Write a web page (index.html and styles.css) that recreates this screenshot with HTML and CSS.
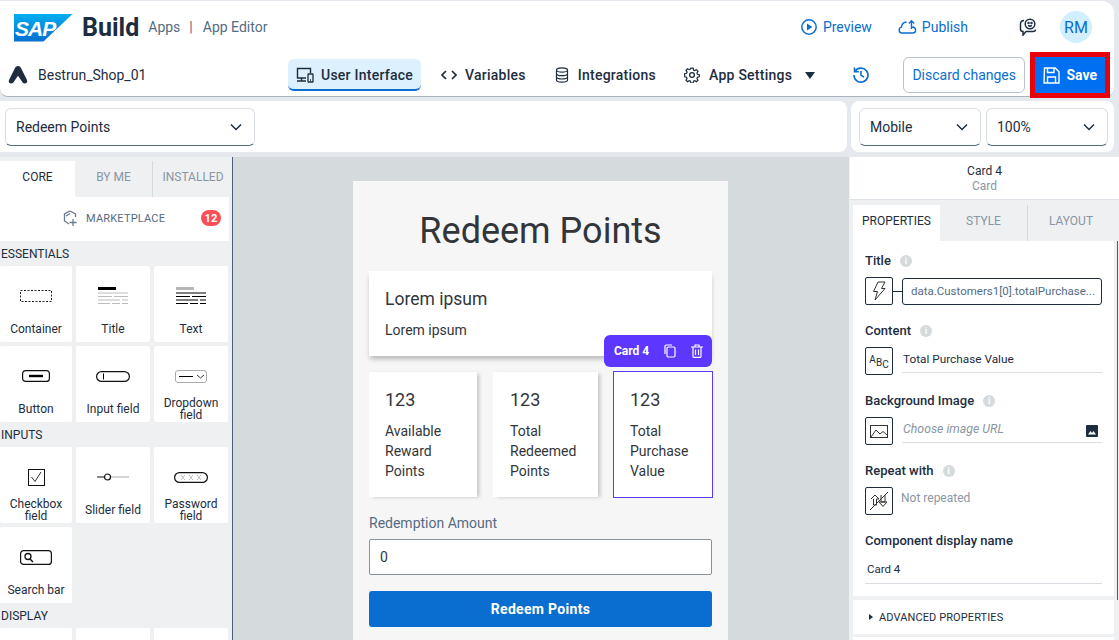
FILE: index.html
```html
<!DOCTYPE html>
<html lang="en">
<head>
  <meta charset="UTF-8">
  <meta name="viewport" content="width=device-width, initial-scale=1.0">
  <title>SAP Build Apps - App Editor</title>
  <link rel="stylesheet" href="styles.css">
</head>
<body>
  <div class="top-card">
    <div class="top-row">
      <div class="sap-logo">SAP</div>
      <span class="build">Build</span>
      <span class="crumb crumb-apps">Apps</span>
      <span class="crumb crumb-bar">|</span>
      <span class="crumb">App Editor</span>
      <div class="top-actions">
        <span class="link">
          <svg width="18" height="18" viewBox="0 0 18 18" fill="none" stroke="#0a6ed1" stroke-width="1.5"><circle cx="9" cy="9" r="7.2"/><path d="M7 5.6 12.4 9 7 12.4Z" fill="#0a6ed1" stroke="none"/></svg>
          Preview
        </span>
        <span class="link link-publish">
          <svg width="19" height="16" viewBox="0 0 19 16" fill="none" stroke="#0a6ed1" stroke-width="1.4"><path d="M6 14H4a3 3 0 0 1-.6-5.9C4 5 6 3 8.6 3.3M14 8c2.4 0 3.6 1.600 3.600 3.200 0 1.600-1 2.800-3 2.800H6"/><path d="M13.500 10V2M10.800 4.500 13.500 1.800 16.200 4.500"/></svg>
          Publish
        </span>
        <svg class="feedback" width="18" height="18" viewBox="0 0 18 18" fill="none" stroke="#1d2d3e" stroke-width="1.500"><path d="M5 2.500C2.500 2.500 1.500 4 1.500 6v5c0 1.500 1 2.500 2.500 2.500V17l3-3.500h7c1.500 0 2.500-1 2.500-2"/><circle cx="11" cy="6" r="4.800"/><circle cx="9.500" cy="5" r=".5"/><circle cx="12.500" cy="5" r=".5"/><path d="M9.200 7.200c1 1 2.600 1 3.600 0"/></svg>
        <div class="avatar">RM</div>
      </div>
    </div>
    <div class="nav-row">
      <svg class="app-mark" width="20" height="18" viewBox="0 0 20 18"><path d="M10 0c1.500 0 2.400.8 3 2l6 12c.8 1.700-.3 3.600-2.200 3.600-1.500 0-2.200-1-3-2.300L10 9.800l-3.800 5.500c-.8 1.300-1.500 2.300-3 2.300C1.300 17.600.2 15.700 1 14L7 2c.6-1.200 1.500-2 3-2Z" fill="#1d2d3e"/></svg>
      <span class="app-name">Bestrun_Shop_01</span>
      <div class="nav-tab nav-tab-on">
        <svg width="18" height="16" viewBox="0 0 18 16" fill="none" stroke="#1d2d3e" stroke-width="1.400"><path d="M10 11H1.500V1.500h13V6M1 14h9M5.500 11v3"/><rect x="12" y="7" width="5" height="8" rx=".6" stroke-width="1.300"/><path d="M14 13h1" /></svg>
        User Interface
      </div>
      <div class="nav-tab nav-vars">
        <svg width="16" height="10" viewBox="0 0 16 10" fill="none" stroke="#1d2d3e" stroke-width="1.700"><path d="M5 1 1 5l4 4M11 1l4 4-4 4"/></svg>
        Variables
      </div>
      <div class="nav-tab nav-integ">
        <svg width="14" height="16" viewBox="0 0 14 16" fill="none" stroke="#1d2d3e" stroke-width="1.200"><ellipse cx="7" cy="3" rx="5.500" ry="2.200"/><path d="M1.500 3v10c0 1.200 2.500 2.200 5.500 2.200s5.500-1 5.500-2.200V3M1.500 6.400c0 1.200 2.500 2.200 5.500 2.200s5.500-1 5.500-2.200M1.500 9.800c0 1.200 2.500 2.200 5.500 2.200s5.500-1 5.500-2.200"/></svg>
        Integrations
      </div>
      <div class="nav-tab nav-settings">
        <svg width="16" height="16" viewBox="0 0 16 16" fill="none" stroke="#1d2d3e" stroke-width="1.300"><circle cx="8" cy="8" r="2.400"/><path d="M6.800 1h2.400l.4 2 1.300.6 1.800-1 1.600 1.800-1.100 1.700.5 1.300 2 .5v2.200l-2 .5-.5 1.300 1.100 1.700-1.600 1.600-1.800-1-1.300.6-.4 2H6.800l-.4-2-1.300-.6-1.800 1-1.600-1.600 1.100-1.700-.5-1.300-2-.5V6.900l2-.5.500-1.300L1.700 3.400l1.600-1.800 1.800 1 1.300-.6Z" transform="translate(.4 .2) scale(.95)"/></svg>
        App Settings
      </div>
      <span class="caret"></span>
      <svg class="history" width="18" height="18" viewBox="0 0 18 18" fill="none" stroke="#0a6ed1" stroke-width="1.600"><path d="M3 5.500A7 7 0 1 1 2 9M2.500 1.500v4.300h4.300M9 5v4.300l3 1.800"/></svg>
      <button class="btn-discard">Discard changes</button>
      <div class="save-box">
        <button class="btn-save">
          <svg width="17" height="17" viewBox="0 0 17 17" fill="none" stroke="#fff" stroke-width="1.400"><path d="M1.500 1h10.700L16 4.800V16H1Z"/><path d="M4.500 1v4.500h6.500V1M4.500 16v-6h8v6"/></svg>
          Save
        </button>
      </div>
    </div>
  </div>

  <div class="tool-row">
    <div class="tool-card tool-left">
      <div class="select select-page"><span>Redeem Points</span><svg class="chev" width="12" height="8" viewBox="0 0 12 8"><path d="M1 1.500 6 6.500 11 1.500" fill="none" stroke="#1d2d3e" stroke-width="1.500"/></svg></div>
    </div>
    <div class="tool-card tool-right">
      <div class="select select-device"><span>Mobile</span><svg class="chev" width="12" height="8" viewBox="0 0 12 8"><path d="M1 1.500 6 6.500 11 1.500" fill="none" stroke="#1d2d3e" stroke-width="1.500"/></svg></div>
      <div class="select select-device"><span>100%</span><svg class="chev" width="12" height="8" viewBox="0 0 12 8"><path d="M1 1.500 6 6.500 11 1.500" fill="none" stroke="#1d2d3e" stroke-width="1.500"/></svg></div>
    </div>
  </div>

  <div class="main-row">
    <div class="left-panel">
      <div class="left-tabs">
        <div class="left-tab left-tab-on">CORE</div>
        <div class="left-tab left-tab-me">BY ME</div>
        <div class="left-tab left-tab-inst">INSTALLED</div>
      </div>
      <div class="market">
        <svg width="16" height="17" viewBox="0 0 16 17" fill="none" stroke="#6a7c90" stroke-width="1.300"><path d="M7 1 1.500 4v7L6 14M7 1l5.500 3v3M3 6l4-2.500M10 9v7M6.500 12.500h7"/></svg>
        <span class="market-text">MARKETPLACE</span>
        <span class="market-badge">12</span>
      </div>
      <div class="palette">
        <h4>ESSENTIALS</h4>
        <div class="grid">
          <div class="tile">
            <div class="tile-icon"><svg width="32" height="12" viewBox="0 0 32 12"><rect x=".5" y=".5" width="31" height="11" fill="none" stroke="#222" stroke-dasharray="2 1.500"/></svg></div>
            <span>Container</span>
          </div>
          <div class="tile">
            <div class="tile-icon"><svg width="30" height="18" viewBox="0 0 30 18"><rect width="18" height="3" fill="#000"/><path d="M0 6h30M0 9.500h14M16 9.500h14M0 13h22M24 13h6M0 16.500h12M14 16.500h8M24 16.500h6" stroke="#bbb"/></svg></div>
            <span>Title</span>
          </div>
          <div class="tile">
            <div class="tile-icon"><svg width="30" height="18" viewBox="0 0 30 18"><rect width="18" height="3" fill="#b5b5b5"/><path d="M0 6h30M0 9.500h14M16 9.500h14M0 13h22M24 13h6M0 16.500h12M14 16.500h8M24 16.500h6" stroke="#000"/></svg></div>
            <span>Text</span>
          </div>
          <div class="tile">
            <div class="tile-icon"><svg width="28" height="12" viewBox="0 0 28 12"><rect x=".6" y=".6" width="26.800" height="10.800" rx="3" fill="none" stroke="#111" stroke-width="1.200"/><rect x="7" y="4.800" width="14" height="2.400" fill="#000"/></svg></div>
            <span>Button</span>
          </div>
          <div class="tile">
            <div class="tile-icon"><svg width="34" height="11" viewBox="0 0 34 11"><rect x=".6" y=".6" width="32.800" height="9.800" rx="4.900" fill="none" stroke="#111" stroke-width="1.200"/><path d="M7.500 2.500v6" stroke="#000"/></svg></div>
            <span>Input field</span>
          </div>
          <div class="tile">
            <div class="tile-icon"><svg width="32" height="13" viewBox="0 0 32 13"><rect x=".5" y=".5" width="31" height="12" rx="2.500" fill="none" stroke="#aaa"/><path d="M4 6.500h14" stroke="#000"/><path d="M22 5l3.500 3L29 5" fill="none" stroke="#333"/></svg></div>
            <span class="two-line">Dropdown field</span>
          </div>
        </div>
        <h4>INPUTS</h4>
        <div class="grid">
          <div class="tile">
            <div class="tile-icon"><svg width="17" height="17" viewBox="0 0 17 17" fill="none"><rect x=".5" y=".5" width="16" height="16" stroke="#111"/><path d="M3.500 8 7 12.500 13 3" stroke="#333"/></svg></div>
            <span class="two-line">Checkbox field</span>
          </div>
          <div class="tile">
            <div class="tile-icon"><svg width="32" height="10" viewBox="0 0 32 10" fill="none"><path d="M0 5h7" stroke="#111"/><path d="M14 5h18" stroke="#aaa"/><circle cx="10.500" cy="5" r="3" stroke="#111" stroke-width="1.200"/></svg></div>
            <span>Slider field</span>
          </div>
          <div class="tile">
            <div class="tile-icon"><svg width="34" height="11" viewBox="0 0 34 11" fill="none"><rect x=".6" y=".6" width="32.800" height="9.800" rx="4.900" stroke="#111" stroke-width="1.200"/><path d="M7 3l4 5M11 3 7 8M15 3l4 5M19 3l-4 5M23 3l4 5M27 3l-4 5" stroke="#bbb"/></svg></div>
            <span class="two-line">Password field</span>
          </div>
          <div class="tile">
            <div class="tile-icon"><svg width="32" height="15" viewBox="0 0 32 15" fill="none"><rect x=".6" y=".6" width="30.800" height="13.800" rx="3" stroke="#111" stroke-width="1.200"/><circle cx="8" cy="6.500" r="3" stroke="#111" stroke-width="1.300"/><path d="M10 9l3 3" stroke="#111" stroke-width="1.500"/></svg></div>
            <span>Search bar</span>
          </div>
        </div>
        <h4>DISPLAY</h4>
        <div class="grid">
          <div class="tile"></div>
          <div class="tile"></div>
          <div class="tile"></div>
        </div>
      </div>
    </div>

    <div class="canvas">
      <div class="page">
        <h1 class="page-title">Redeem Points</h1>
        <div class="hero-card">
          <div class="hero-title">Lorem ipsum</div>
          <div class="hero-text">Lorem ipsum</div>
        </div>
        <div class="stat-row">
          <div class="stat stat-a">
            <div class="stat-num">123</div>
            <div class="stat-label">Available Reward Points</div>
          </div>
          <div class="stat stat-b">
            <div class="stat-num">123</div>
            <div class="stat-label">Total Redeemed Points</div>
          </div>
          <div class="stat stat-c">
            <div class="stat-num">123</div>
            <div class="stat-label">Total Purchase Value</div>
            <div class="selected-tag">
              <b>Card 4</b>
              <svg width="12" height="14" viewBox="0 0 12 14" fill="none" stroke="#fff" stroke-width="1.200"><rect x="3" y="3" width="8" height="10" rx="1.200"/><path d="M1 10V2.200C1 1.500 1.500 1 2.200 1H8"/></svg>
              <svg width="12" height="14" viewBox="0 0 12 14" fill="none" stroke="#fff" stroke-width="1.200"><path d="M0 3h12M4 3V1h4v2M2 3v9.500c0 .500.300.800.800.800h6.400c.500 0 .800-.300.800-.800V3M4.500 5.500v5.500M7.500 5.500v5.500"/></svg>
            </div>
          </div>
        </div>
        <div class="field-label">Redemption Amount</div>
        <div class="field-input">0</div>
        <div class="redeem-btn">Redeem Points</div>
      </div>
    </div>

    <div class="right-panel">
      <div class="card-head">
        <div class="card-head-name">Card 4</div>
        <div class="card-head-type">Card</div>
      </div>
      <div class="right-tabs">
        <div class="right-tab right-tab-on">PROPERTIES</div>
        <div class="right-tab right-tab-style">STYLE</div>
        <div class="right-tab right-tab-layout">LAYOUT</div>
      </div>
      <div class="props">
        <div class="prop-title">Title <i class="info">i</i></div>
        <div class="prop-row">
          <div class="prop-icon"><svg width="14" height="20" viewBox="0 0 14 20" fill="none" stroke="#333" stroke-width="1"><path d="M6 1h7L9.500 7.500H13L3 19l2.500-8.500H1.500Z"/></svg></div>
          <div class="prop-link"></div>
          <div class="prop-bound">data.Customers1[0].totalPurchase...</div>
        </div>
        <div class="prop-title">Content <i class="info">i</i></div>
        <div class="prop-row">
          <div class="prop-icon prop-abc"><span class="abc-a">A</span><span class="abc-b">B</span><span class="abc-c">C</span></div>
          <div class="prop-value">Total Purchase Value</div>
        </div>
        <div class="prop-title">Background Image <i class="info">i</i></div>
        <div class="prop-row">
          <div class="prop-icon"><svg width="18" height="13" viewBox="0 0 18 13" fill="none" stroke="#333"><rect x=".5" y=".5" width="17" height="12"/><path d="M1 12 6 5l4 4 3-2.500 4 3.500"/></svg></div>
          <div class="prop-value prop-hint">Choose image URL<svg class="pick" width="12" height="12" viewBox="0 0 12 12"><rect width="12" height="12" rx="1" fill="#1d2d3e"/><path d="M2 9.500 4.500 6 6 8l1.500-2 2.500 3.500Z" fill="#fff"/></svg></div>
        </div>
        <div class="prop-title">Repeat with <i class="info">i</i></div>
        <div class="prop-row">
          <div class="prop-icon"><svg width="18" height="20" viewBox="0 0 18 20" fill="none" stroke="#333"><path d="M1 8l4-4 4 4H6.500v6h-3V8M9 11h8l-4 4.500ZM11 4v7h4V4M0 19 18 1"/></svg></div>
          <div class="prop-plain">Not repeated</div>
        </div>
        <div class="prop-title">Component display name</div>
        <div class="prop-display">Card 4</div>
      </div>
      <div class="advanced"><span class="adv-caret"></span>ADVANCED PROPERTIES</div>
      <div class="after-advanced"></div>
    </div>
  </div>
</body>
</html>
```

FILE: styles.css
```css
* {
  box-sizing: border-box;
}
html, body {
  margin: 0;
  padding: 0;
  width: 1119px;
  height: 640px;
  overflow: hidden;
}
body {
  background: #e5e8ec;
  color: #1d2d3e;
  font-family: "Roboto", "Liberation Sans", sans-serif;
  font-size: 14px;
}

/* top header */
.top-card {
  margin: 1px 5px 0 0;
  height: 96px;
  background: white;
  border-radius: 0 12px 8px 8px;
  border-bottom: 1px solid #a9b4be;
  position: relative;
}
.top-row {
  height: 52px;
  display: flex;
  align-items: center;
  padding-left: 14px;
}
.sap-logo {
  width: 59px;
  height: 28px;
  margin-top: 1px;
  background: linear-gradient(#00aeef, #0a6ed1);
  clip-path: polygon(0 0, 100% 0, 50% 100%, 0 100%);
  color: white;
  font: italic bold 21px/29px "Liberation Sans", sans-serif;
  letter-spacing: -1px;
  padding-left: 1px;
}
.build {
  margin-left: 9px;
  font-size: 25px;
  font-weight: 700;
  color: #1d2d3e;
}
.crumb {
  font-size: 14px;
  color: #556b82;
}
.crumb-apps {
  margin-left: 9px;
}
.crumb-bar {
  margin: 0 10px 0 9px;
}
.top-actions {
  margin-left: auto;
  display: flex;
  align-items: center;
  padding-right: 22px;
}
.link {
  display: flex;
  align-items: center;
  gap: 5px;
  color: #0a6ed1;
  font-size: 14px;
}
.link-publish {
  margin-left: 26px;
}
.feedback {
  margin-left: 51px;
}
.avatar {
  margin-left: 23px;
  width: 32px;
  height: 32px;
  border-radius: 50%;
  background: #d1efff;
  color: #0a6ed1;
  font-size: 16px;
  display: flex;
  align-items: center;
  justify-content: center;
}
.nav-row {
  height: 44px;
  display: flex;
  align-items: center;
  padding-left: 8px;
}
.app-name {
  margin-left: 10px;
  width: 110px;
  color: #1d2d3e;
}
.nav-tab {
  display: flex;
  align-items: center;
  font-weight: 500;
  letter-spacing: .25px;
  gap: 8px;
  height: 32px;
}
.nav-tab-on {
  margin-left: 140px;
  width: 133px;
  padding: 2px 0 0 8px;
  gap: 7px;
  background: #dcf0fe;
  border-radius: 6px;
  border-bottom: 2px solid #0a6ed1;
}
.nav-vars {
  margin-left: 20px;
}
.nav-integ {
  margin-left: 29px;
  gap: 9px;
}
.nav-settings {
  margin-left: 28px;
  gap: 9px;
}
.caret {
  margin-left: 13px;
  width: 0;
  height: 0;
  border-left: 5px solid transparent;
  border-right: 5px solid transparent;
  border-top: 7px solid #1d2d3e;
}
.history {
  margin-left: 37px;
}
.btn-discard {
  margin-left: 33px;
  width: 122px;
  height: 36px;
  border: 1px solid #b8c2cc;
  border-radius: 6px;
  background: white;
  color: #0a6ed1;
  font: 14px "Roboto", sans-serif;
  padding: 0;
}
.save-box {
  margin-left: 5px;
  width: 80px;
  height: 46px;
  border: 5px solid #e8000a;
}
.btn-save {
  width: 100%;
  height: 100%;
  border: none;
  background: #0070f2;
  color: white;
  font: 700 14px "Roboto", sans-serif;
  display: flex;
  align-items: center;
  justify-content: center;
  gap: 6px;
  padding: 0;
}

/* page and device selects */
.tool-row {
  margin-top: 4px;
  display: flex;
  gap: 4px;
  height: 51px;
}
.tool-card {
  background: white;
  border-radius: 8px;
  display: flex;
  align-items: center;
}
.tool-left {
  width: 847px;
  padding-left: 5px;
  border-radius: 0 8px 8px 0;
}
.tool-right {
  width: 263px;
  padding-left: 8px;
  gap: 5px;
}
.select {
  height: 38px;
  background: white;
  border: 1px solid #d9dee3;
  border-bottom: 1px solid #556b82;
  border-radius: 6px;
  display: flex;
  align-items: center;
  justify-content: space-between;
  padding: 0 12px 0 10px;
}
.select-page {
  width: 250px;
}
.select-device {
  width: 122px;
}

/* main row */
.main-row {
  margin-top: 5px;
  display: flex;
  height: 483px;
}
.left-panel {
  width: 233px;
  background: #eef0f2;
  border-right: 1px solid #475e75;
  overflow: hidden;
}
.left-tabs {
  margin-top: 4px;
  display: flex;
  height: 36px;
  margin-right: -1px;
}
.left-tab {
  display: flex;
  align-items: center;
  justify-content: center;
  font-size: 12px;
  padding-bottom: 4px;
  color: #8996a3;
  background: #eef0f2;
}
.left-tab-on {
  width: 75px;
  background: white;
  color: #1d2d3e;
}
.left-tab-me {
  width: 78px;
  border-right: 1px solid #d5dadd;
}
.left-tab-inst {
  flex: 1;
}
.market {
  height: 44px;
  width: 229px;
  background: white;
  display: flex;
  align-items: center;
  padding-left: 63px;
  padding-bottom: 2px;
  font-size: 11px;
  letter-spacing: .2px;
  color: #556b82;
}
.market-text {
  margin-left: 7px;
}
.market-badge {
  margin-left: auto;
  margin-right: 8px;
  width: 20px;
  height: 16px;
  border-radius: 8px;
  background: #fb4f57;
  color: white;
  font-weight: 700;
  display: flex;
  align-items: center;
  justify-content: center;
}
.palette h4 {
  margin: 0;
  height: 25px;
  line-height: 27px;
  padding-left: 1px;
  font-size: 12px;
  font-weight: 400;
  color: #1d2d3e;
}
.grid {
  display: grid;
  grid-template-columns: 72px 74px 74px;
  grid-auto-rows: 76px;
  gap: 4px;
}
.tile {
  background: white;
  border-radius: 2px;
  text-align: center;
  font-size: 12px;
  position: relative;
  display: flex;
  flex-direction: column;
  align-items: center;
}
.tile-icon {
  height: 44px;
  padding-top: 16px;
  display: flex;
  align-items: center;
  justify-content: center;
}
.tile span {
  margin-top: 12px;
  line-height: 14px;
}
.tile .two-line {
  margin-top: 7px;
  line-height: 12px;
}

/* canvas */
.canvas {
  width: 616px;
  background: #d5dadd;
  padding: 24px 0 0 120px;
  overflow: hidden;
}
.page {
  width: 375px;
  height: 470px;
  background: #f6f6f6;
  padding: 0 16px;
}
.page-title {
  margin: 0;
  padding-top: 27px;
  height: 90px;
  text-align: center;
  font-size: 36px;
  line-height: 46px;
  font-weight: 400;
  color: #32363a;
}
.hero-card {
  height: 85px;
  background: white;
  padding: 17px 16px 0;
  box-shadow: 0 4px 5px -1px rgba(0, 0, 0, 0.25);
  color: #32363a;
}
.hero-title {
  font-size: 17.5px;
  line-height: 22px;
}
.hero-text {
  margin-top: 10px;
  font-size: 14px;
  line-height: 20px;
}
.stat-row {
  margin-top: 16px;
  display: flex;
  width: 344px;
  height: 125px;
}
.stat {
  height: 125px;
  background: white;
  padding: 17px 16px 0;
  color: #32363a;
  position: relative;
}
.stat-a {
  width: 108px;
  box-shadow: 3px 1px 4px -1px rgba(0, 0, 0, 0.22);
}
.stat-b {
  margin-left: 16px;
  width: 105px;
  padding-left: 17px;
  box-shadow: 3px 1px 4px -1px rgba(0, 0, 0, 0.22);
}
.stat-c {
  margin: -1px 0 0 15px;
  width: 100px;
  height: 127px;
  border: 1px solid #5d36ff;
}
.stat-num {
  font-size: 18px;
  line-height: 22px;
}
.stat-label {
  margin-top: 10px;
  font-size: 14px;
  line-height: 20px;
}
.selected-tag {
  position: absolute;
  top: -37px;
  right: 0;
  width: 108px;
  height: 32px;
  border-radius: 6px;
  background: #5d36ff;
  color: white;
  display: flex;
  align-items: center;
  padding-left: 10px;
  gap: 15px;
  font-size: 12px;
}
.field-label {
  margin-top: 18px;
  height: 24px;
  line-height: 16px;
  color: #556b82;
}
.field-input {
  width: 343px;
  height: 36px;
  background: white;
  border: 1px solid #89919a;
  border-radius: 2px;
  line-height: 34px;
  padding-left: 10px;
  color: #32363a;
}
.redeem-btn {
  margin-top: 16px;
  width: 343px;
  height: 36px;
  border-radius: 3px;
  background: #0a6ed1;
  color: white;
  font-weight: 700;
  letter-spacing: .3px;
  line-height: 36px;
  text-align: center;
}

/* right panel */
.right-panel {
  width: 270px;
  background: #eef0f2;
  overflow: hidden;
  position: relative;
}
.right-panel::after {
  content: "";
  position: absolute;
  top: 84px;
  right: 1px;
  width: 1px;
  height: 359px;
  background: #475e75;
}
.card-head {
  height: 43px;
  margin-left: 1px;
  background: white;
  border-bottom: 1px solid #dfe3e7;
  text-align: center;
  padding-top: 7px;
  font-size: 12px;
  line-height: 15px;
}
.card-head-type {
  color: #8996a3;
}
.right-tabs {
  margin: 5px 0 0 4px;
  display: flex;
  height: 36px;
  font-size: 12px;
  color: #8996a3;
}
.right-tab {
  display: flex;
  align-items: center;
  justify-content: center;
  padding-bottom: 4px;
}
.right-tab-on {
  width: 87px;
  background: white;
  color: #1d2d3e;
}
.right-tab-style {
  width: 88px;
  border-right: 1px solid #d5dadd;
}
.right-tab-layout {
  width: 86px;
}
.props {
  margin-left: 4px;
  width: 261px;
  height: 355px;
  background: white;
  padding: 12px 12px 0 12px;
}
.prop-title {
  height: 16px;
  line-height: 16px;
  font-weight: 500;
  font-size: 13px;
  display: flex;
  align-items: center;
  color: #1d2d3e;
}
.info {
  margin-left: 9px;
  width: 12px;
  height: 12px;
  border-radius: 50%;
  background: #d5dadd;
  color: white;
  font: bold 9px/12px "Roboto", sans-serif;
  text-align: center;
}
.prop-row {
  margin: 8px 0 18px;
  height: 28px;
  display: flex;
  align-items: center;
}
.prop-icon {
  width: 28px;
  height: 28px;
  flex: none;
  border: 1px solid #1d2d3e;
  border-radius: 2px;
  display: flex;
  align-items: center;
  justify-content: center;
}
.prop-link {
  width: 9px;
  border-top: 1px solid #1d2d3e;
}
.prop-bound {
  width: 201px;
  height: 27px;
  border: 1px solid #1d2d3e;
  border-radius: 3px;
  line-height: 25px;
  padding-left: 8px;
  font-size: 11.5px;
  color: #556b82;
  white-space: nowrap;
}
.prop-value {
  margin-left: 9px;
  flex: 1;
  align-self: flex-start;
  height: 26px;
  border-bottom: 1px solid #d9dee3;
  padding-left: 1px;
  font-size: 11.8px;
  line-height: 24px;
  position: relative;
}
.prop-hint {
  font-style: italic;
  font-size: 12.3px;
  color: #8996a3;
  line-height: 24px;
}
.pick {
  position: absolute;
  right: 4px;
  top: 8px;
}
.prop-plain {
  margin: -6px 0 0 8px;
  font-size: 12px;
  color: #8996a3;
}
.prop-abc {
  font-size: 10px;
  align-items: flex-start;
  color: #1d2d3e;
  padding-top: 6px;
}
.abc-b {
  margin-top: 3px;
}
.abc-c {
  margin-top: 5px;
}
.prop-display {
  margin-top: 11px;
  height: 24px;
  border-bottom: 1px solid #d9dee3;
  padding-left: 2px;
  font-size: 11.5px;
  line-height: 18px;
}
.advanced {
  margin: 4px 0 0 4px;
  width: 261px;
  height: 34px;
  background: white;
  display: flex;
  align-items: center;
  padding-left: 16px;
  font-size: 11px;
  letter-spacing: .1px;
  color: #1d2d3e;
}
.adv-caret {
  margin-right: 6px;
  width: 0;
  height: 0;
  border-top: 3.500px solid transparent;
  border-bottom: 3.500px solid transparent;
  border-left: 4px solid #1d2d3e;
}
.after-advanced {
  margin: 3px 0 0 4px;
  width: 261px;
  height: 10px;
  background: white;
}
```
